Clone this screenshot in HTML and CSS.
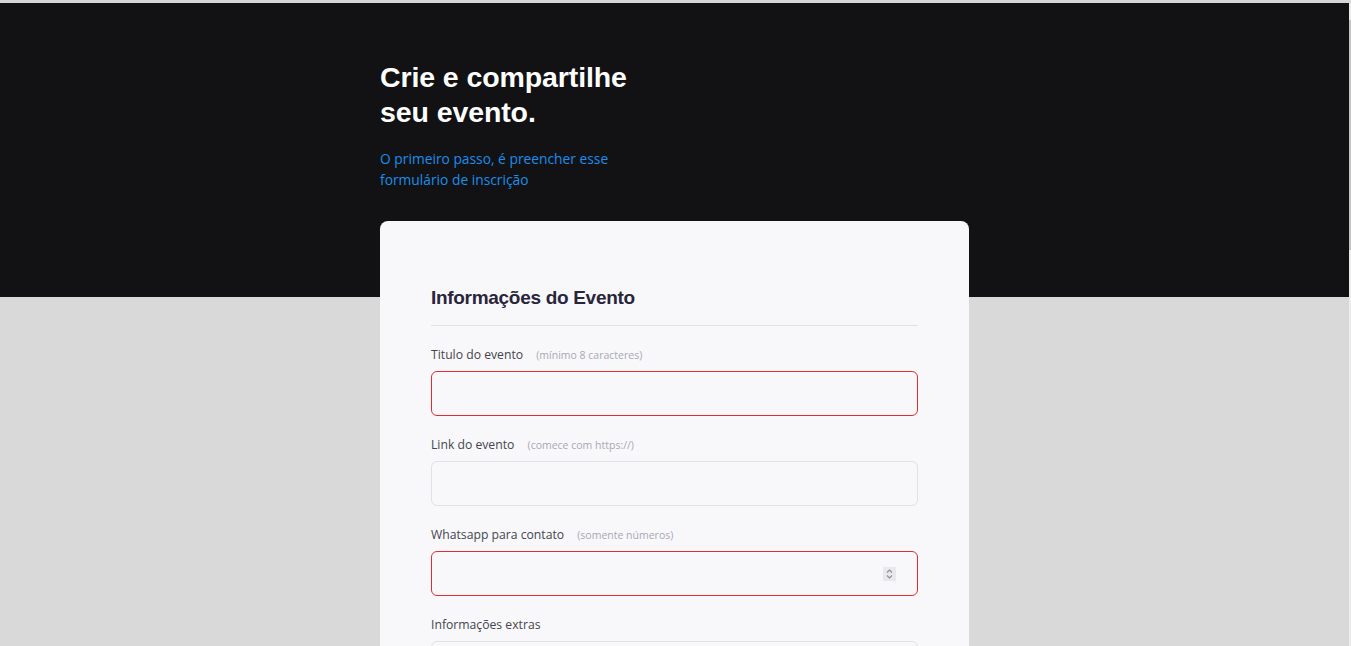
FILE: index.html
```html
<!DOCTYPE html>
<html lang="pt-BR">
<head>
<meta charset="utf-8">
<title>Crie e compartilhe seu evento</title>
<link rel="stylesheet" href="styles.css">
</head>
<body>
<div class="page">
  <main class="main">
    <div class="container">
      <header class="hero">
        <h1 class="hero-title">Crie e compartilhe<br>seu evento.</h1>
        <p class="hero-sub">O primeiro passo, é preencher esse<br>formulário de inscrição</p>
      </header>
      <form class="card">
        <h2 class="card-title">Informações do Evento</h2>
        <div class="field">
          <label class="label">Titulo do evento <span class="hint">(mínimo 8 caracteres)</span></label>
          <div class="box box-error"><input class="input" type="text"></div>
        </div>
        <div class="field">
          <label class="label">Link do evento <span class="hint">(comece com https://)</span></label>
          <div class="box"><input class="input" type="text"></div>
        </div>
        <div class="field">
          <label class="label">Whatsapp para contato <span class="hint">(somente números)</span></label>
          <div class="box box-error">
            <input class="input" type="text">
            <span class="spinner">
              <svg width="13" height="14" viewBox="0 0 13 14"><path d="M4 5.5 L6.5 3 L9 5.5" fill="none" stroke="#8e8e96" stroke-width="1.2"/><path d="M4 8.5 L6.5 11 L9 8.5" fill="none" stroke="#8e8e96" stroke-width="1.2"/></svg>
            </span>
          </div>
        </div>
        <div class="field">
          <label class="label">Informações extras</label>
          <div class="box box-tall"><textarea class="input"></textarea></div>
        </div>
      </form>
    </div>
  </main>
  <aside class="scrollbar"><div class="thumb"></div></aside>
</div>
</body>
</html>
```

FILE: styles.css
```css
html, body {
  margin: 0;
  padding: 0;
}
body {
  border-top: 3px solid #d6d6d6;
  height: 643px;
  overflow: hidden;
  font-family: "Open Sans", "Noto Sans", sans-serif;
}
.page {
  display: flex;
  height: 100%;
}
.main {
  flex: 1;
  background: linear-gradient(#121214 0, #121214 294px, #d9d9d9 294px);
}
.scrollbar {
  width: 2px;
  background: #ececec;
  padding-top: 17px;
}
.thumb {
  height: 230px;
  background: #c4c4c4;
}
.container {
  width: 589px;
  margin: 0 auto;
}
.hero {
  padding-top: 57px;
}
.hero-title {
  margin: 0;
  font-family: "Liberation Sans", Arial, sans-serif;
  font-weight: 700;
  font-size: 28.5px;
  line-height: 35px;
  color: #ffffff;
  letter-spacing: -0.1px;
}
.hero-sub {
  margin: 18px 0 0;
  font-size: 13.8px;
  line-height: 21px;
  color: #1a8eec;
}
.card {
  margin-top: 31px;
  background: #f8f8fa;
  border-radius: 8px;
  padding: 65px 51px 40px;
}
.card-title {
  margin: 0;
  padding-bottom: 15px;
  border-bottom: 1px solid #e1e1e6;
  font-family: "Liberation Sans", Arial, sans-serif;
  font-weight: 700;
  font-size: 19px;
  line-height: 24px;
  letter-spacing: -0.3px;
  color: #29253a;
}
.field {
  margin-top: 20px;
}
.label {
  display: block;
  margin-bottom: 7px;
  font-size: 12.2px;
  line-height: 18px;
  color: #45454d;
}
.hint {
  margin-left: 10px;
  font-size: 10.5px;
  color: #a8a8b3;
}
.box {
  display: flex;
  align-items: center;
  height: 45px;
  box-sizing: border-box;
  border: 1px solid #e1e1e6;
  border-radius: 6px;
  background: #f8f8fa;
  padding: 0 21px 0 16px;
}
.box-error {
  border-color: #e02d2d;
}
.box-tall {
  height: 90px;
}
.input {
  flex: 1;
  min-width: 0;
  border: 0;
  outline: 0;
  background: transparent;
  font: inherit;
  resize: none;
  height: 100%;
  padding: 0;
}
.spinner {
  display: flex;
  width: 13px;
  height: 14px;
  background: #e9e9ed;
}
```
